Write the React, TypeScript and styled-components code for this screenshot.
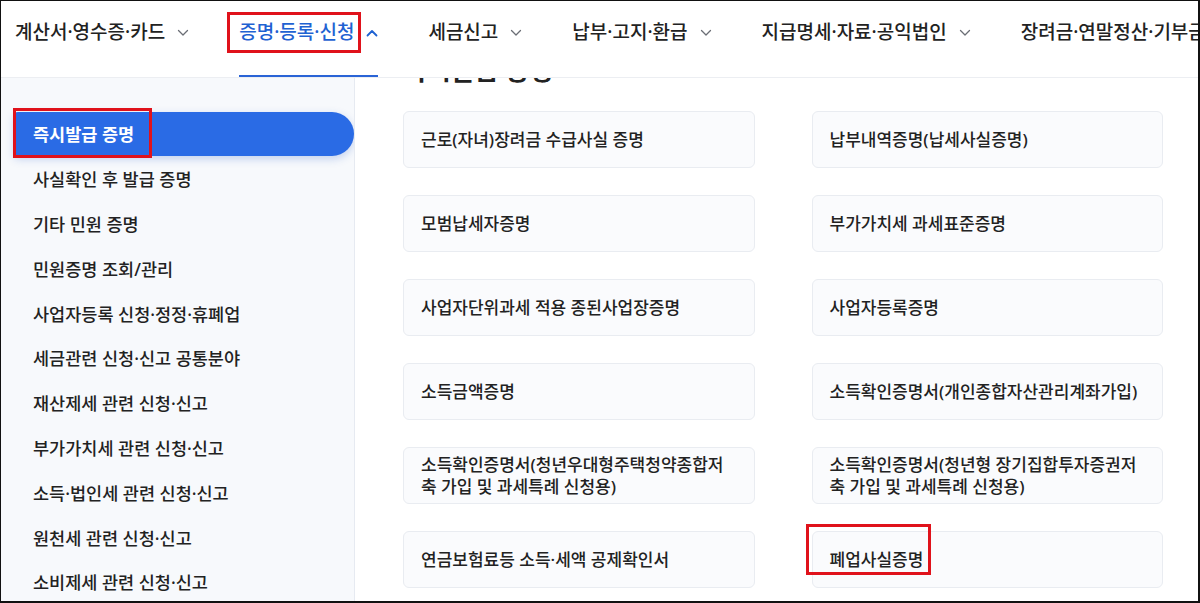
import React from 'react';
import styled, { createGlobalStyle, css } from 'styled-components';

const GlobalStyle = createGlobalStyle`
  html, body {
    margin: 0;
    padding: 0;
    background: #ffffff;
  }
  body {
    font-family: 'Noto Sans', 'Noto Sans CJK KR', sans-serif;
    color: #222222;
  }
  * {
    box-sizing: border-box;
  }
`;

const navItems = [
  { label: '계산서·영수증·카드' },
  { label: '증명·등록·신청', active: true },
  { label: '세금신고' },
  { label: '납부·고지·환급' },
  { label: '지급명세·자료·공익법인' },
  { label: '장려금·연말정산·기부금' },
];

const sideItems = [
  '즉시발급 증명',
  '사실확인 후 발급 증명',
  '기타 민원 증명',
  '민원증명 조회/관리',
  '사업자등록 신청·정정·휴폐업',
  '세금관련 신청·신고 공통분야',
  '재산제세 관련 신청·신고',
  '부가가치세 관련 신청·신고',
  '소득·법인세 관련 신청·신고',
  '원천세 관련 신청·신고',
  '소비제세 관련 신청·신고',
];

// each certificate: lines as they wrap on the page
const certs: string[][] = [
  ['근로(자녀)장려금 수급사실 증명'],
  ['납부내역증명(납세사실증명)'],
  ['모범납세자증명'],
  ['부가가치세 과세표준증명'],
  ['사업자단위과세 적용 종된사업장증명'],
  ['사업자등록증명'],
  ['소득금액증명'],
  ['소득확인증명서(개인종합자산관리계좌가입)'],
  ['소득확인증명서(청년우대형주택청약종합저', '축 가입 및 과세특례 신청용)'],
  ['소득확인증명서(청년형 장기집합투자증권저', '축 가입 및 과세특례 신청용)'],
  ['연금보험료등 소득·세액 공제확인서'],
  ['폐업사실증명'],
];

const Chevron: React.FC<{ up?: boolean }> = ({ up }) => (
  <ChevronIcon $up={!!up} width="12" height="8" viewBox="0 0 12 8" fill="none">
    <polyline
      points={up ? '1.5,6.5 6,2 10.5,6.5' : '1.5,1.5 6,6 10.5,1.5'}
      stroke="currentColor"
      strokeWidth={up ? 1.8 : 1.3}
      strokeLinecap="round"
      strokeLinejoin="round"
    />
  </ChevronIcon>
);

const App: React.FC = () => {
  return (
    <>
      <GlobalStyle />
      <Frame>
        <Header>
          {navItems.map((item) => (
            <NavItem key={item.label} $active={!!item.active}>
              {item.active ? (
                <Marked $t={-7} $r={-7} $b={-8} $l={-12}>
                  {item.label}
                </Marked>
              ) : (
                <span>{item.label}</span>
              )}
              <Chevron up={item.active} />
            </NavItem>
          ))}
        </Header>
        <Body>
          <Sidebar>
            {sideItems.map((label, i) => (
              <SideItem key={label} $active={i === 0}>
                {i === 0 ? (
                  <Marked $t={-14} $r={-18} $b={-12} $l={-20}>
                    {label}
                  </Marked>
                ) : (
                  label
                )}
              </SideItem>
            ))}
          </Sidebar>
          <Main>
            <PageTitle>즉시발급 증명</PageTitle>
            <CardGrid>
              {certs.map((lines) => (
                <Card key={lines.join('')}>
                  {lines[0] === '폐업사실증명' ? (
                    <Marked $t={-25} $r={-8} $b={-4} $l={-24}>
                      {lines[0]}
                    </Marked>
                  ) : (
                    <CardText>
                      {lines.map((line, i) => (
                        <React.Fragment key={line}>
                          {i > 0 && <br />}
                          {line}
                        </React.Fragment>
                      ))}
                    </CardText>
                  )}
                </Card>
              ))}
            </CardGrid>
          </Main>
        </Body>
      </Frame>
    </>
  );
};

const Frame = styled.div`
  width: 1200px;
  height: 603px;
  border: 1px solid #111111;
  border-right-width: 2px;
  border-bottom-width: 2px;
  display: flex;
  flex-direction: column;
  overflow: hidden;
  background: #ffffff;
`;

const Header = styled.nav`
  height: 77px;
  flex: none;
  display: flex;
  gap: 50px;
  padding-left: 14px;
  border-bottom: 1px solid #eceef2;
  white-space: nowrap;
  overflow: hidden;
  position: relative;
  z-index: 2;
  background: #ffffff;
`;

const NavItem = styled.div<{ $active: boolean }>`
  display: flex;
  align-items: flex-start;
  gap: 12px;
  height: 77px;
  padding-top: 18px;
  font-size: 19px;
  font-weight: 500;
  line-height: 26px;
  color: #222222;
  border-bottom: 3px solid transparent;
  flex: none;
  ${(p) =>
    p.$active &&
    css`
      color: #1f62d2;
      border-bottom-color: #2a64d6;
    `}
`;

const ChevronIcon = styled.svg<{ $up: boolean }>`
  margin-top: 10px;
  color: ${(p) => (p.$up ? '#1f62d2' : '#6a6e75')};
`;

const Marked = styled.span<{ $t: number; $r: number; $b: number; $l: number }>`
  position: relative;
  display: inline-block;
  &::after {
    content: '';
    position: absolute;
    top: ${(p) => p.$t}px;
    right: ${(p) => p.$r}px;
    bottom: ${(p) => p.$b}px;
    left: ${(p) => p.$l}px;
    border: 3px solid #e0121b;
    pointer-events: none;
  }
`;

const Body = styled.div`
  flex: 1;
  display: flex;
  min-height: 0;
`;

const Sidebar = styled.aside`
  width: 354px;
  flex: none;
  background: #f7f9fc;
  border-right: 1px solid #e6eaf1;
  padding-top: 34px;
  padding-left: 13px;
  overflow: hidden;
`;

const SideItem = styled.div<{ $active: boolean }>`
  height: 44.8px;
  display: flex;
  align-items: center;
  padding-left: 19px;
  font-size: 17.5px;
  font-weight: 500;
  line-height: 24px;
  color: #222222;
  white-space: nowrap;
  ${(p) =>
    p.$active &&
    css`
      height: 44px;
      margin-bottom: 0.8px;
      background: #2a6be5;
      color: #ffffff;
      font-weight: 700;
      border-radius: 4px 22px 22px 4px;
      box-shadow: 0 3px 8px rgba(40, 90, 200, 0.25);
    `}
`;

const Main = styled.main`
  flex: 1;
  padding: 0 35px 0 48px;
  overflow: hidden;
  min-width: 0;
`;

const PageTitle = styled.h2`
  margin: -24px 0 25px;
  font-size: 26px;
  font-weight: 700;
  line-height: 32px;
  color: #222222;
  white-space: nowrap;
`;

const CardGrid = styled.div`
  display: grid;
  grid-template-columns: 1fr 1fr;
  column-gap: 57px;
  row-gap: 27px;
`;

const Card = styled.div`
  height: 57px;
  display: flex;
  align-items: center;
  padding: 0 17px;
  background: #fafbfd;
  border: 1px solid #e9ecf1;
  border-radius: 6px;
  font-size: 17px;
  font-weight: 500;
  line-height: 22px;
  color: #222222;
  white-space: nowrap;
`;

const CardText = styled.span`
  display: block;
`;

export default App;
